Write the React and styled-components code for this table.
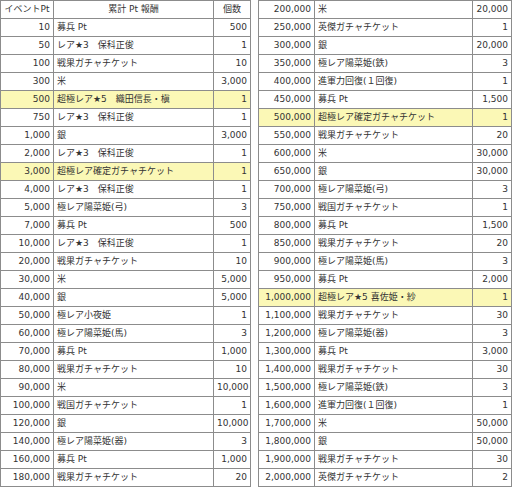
import styled, { createGlobalStyle } from "styled-components";

const GlobalStyle = createGlobalStyle`
    * { box-sizing: border-box; }
    body {
        margin: 0;
        background: #fff;
        font-family: "DejaVu Sans", "Noto Sans CJK JP", sans-serif;
    }
`;

const Page = styled.div`
    display: flex;
    gap: 7px;
    align-items: flex-start;
`;

const Table = styled.table`
    border-collapse: separate;
    border-spacing: 0;
    table-layout: fixed;
    width: ${(p) => p.$width}px;
    border-left: 1px solid #8c8c8c;
    border-top: 1px solid #8c8c8c;
    font-size: 9px;
    color: #333;
`;

const Row = styled.tr`
    background: ${(p) => (p.$hl ? "#fbf8b6" : "#fff")};
`;

const Cell = styled.td`
    height: 18px;
    padding: 0 3px;
    border-right: 1px solid #8c8c8c;
    border-bottom: 1px solid #8c8c8c;
    text-align: ${(p) => p.$align || "left"};
    white-space: nowrap;
    overflow: hidden;
    line-height: 17px;
    font-family: "DejaVu Sans", "Noto Sans CJK JP", sans-serif;
`;

const Head = styled(Cell).attrs({ as: "th" })`
    font-weight: normal;
    text-align: center;
    padding: 0 1px;
`;

const left = [
    ["10", "募兵 Pt", "500"],
    ["50", "レア★3　保科正俊", "1"],
    ["100", "戦果ガチャチケット", "10"],
    ["300", "米", "3,000"],
    ["500", "超極レア★5　織田信長・槇", "1", true],
    ["750", "レア★3　保科正俊", "1"],
    ["1,000", "銀", "3,000"],
    ["2,000", "レア★3　保科正俊", "1"],
    ["3,000", "超極レア確定ガチャチケット", "1", true],
    ["4,000", "レア★3　保科正俊", "1"],
    ["5,000", "極レア陽菜姫(弓)", "3"],
    ["7,000", "募兵 Pt", "500"],
    ["10,000", "レア★3　保科正俊", "1"],
    ["20,000", "戦果ガチャチケット", "10"],
    ["30,000", "米", "5,000"],
    ["40,000", "銀", "5,000"],
    ["50,000", "極レア小夜姫", "1"],
    ["60,000", "極レア陽菜姫(馬)", "3"],
    ["70,000", "募兵 Pt", "1,000"],
    ["80,000", "戦果ガチャチケット", "10"],
    ["90,000", "米", "10,000"],
    ["100,000", "戦国ガチャチケット", "1"],
    ["120,000", "銀", "10,000"],
    ["140,000", "極レア陽菜姫(器)", "3"],
    ["160,000", "募兵 Pt", "1,000"],
    ["180,000", "戦果ガチャチケット", "20"],
];

const right = [
    ["200,000", "米", "20,000"],
    ["250,000", "英傑ガチャチケット", "1"],
    ["300,000", "銀", "20,000"],
    ["350,000", "極レア陽菜姫(鉄)", "3"],
    ["400,000", "進軍力回復(１回復)", "1"],
    ["450,000", "募兵 Pt", "1,500"],
    ["500,000", "超極レア確定ガチャチケット", "1", true],
    ["550,000", "戦果ガチャチケット", "20"],
    ["600,000", "米", "30,000"],
    ["650,000", "銀", "30,000"],
    ["700,000", "極レア陽菜姫(弓)", "3"],
    ["750,000", "戦国ガチャチケット", "1"],
    ["800,000", "募兵 Pt", "1,500"],
    ["850,000", "戦果ガチャチケット", "20"],
    ["900,000", "極レア陽菜姫(馬)", "3"],
    ["950,000", "募兵 Pt", "2,000"],
    ["1,000,000", "超極レア★5 喜佐姫・紗", "1", true],
    ["1,100,000", "戦果ガチャチケット", "30"],
    ["1,200,000", "極レア陽菜姫(器)", "3"],
    ["1,300,000", "募兵 Pt", "3,000"],
    ["1,400,000", "戦果ガチャチケット", "30"],
    ["1,500,000", "極レア陽菜姫(鉄)", "3"],
    ["1,600,000", "進軍力回復(１回復)", "1"],
    ["1,700,000", "米", "50,000"],
    ["1,800,000", "銀", "50,000"],
    ["1,900,000", "戦果ガチャチケット", "30"],
    ["2,000,000", "英傑ガチャチケット", "2"],
];

const RewardTable = ({ rows, widths, header }) => (
    <Table $width={widths.reduce((a, b) => a + b, 1)}>
        <colgroup>
            {widths.map((w, i) => (
                <col key={i} style={{ width: w }} />
            ))}
        </colgroup>
        <tbody>
            {header && (
                <Row>
                    <Head>イベントPt</Head>
                    <Head>累計 Pt 報酬</Head>
                    <Head>個数</Head>
                </Row>
            )}
            {rows.map(([pt, name, count, hl]) => (
                <Row key={pt} $hl={hl}>
                    <Cell $align="right">{pt}</Cell>
                    <Cell>{name}</Cell>
                    <Cell $align="right">{count}</Cell>
                </Row>
            ))}
        </tbody>
    </Table>
);

const App = () => (
    <>
        <GlobalStyle />
        <Page>
            <RewardTable rows={left} widths={[53, 160, 37]} header />
            <RewardTable rows={right} widths={[56, 158, 39]} />
        </Page>
    </>
);

export default App;
